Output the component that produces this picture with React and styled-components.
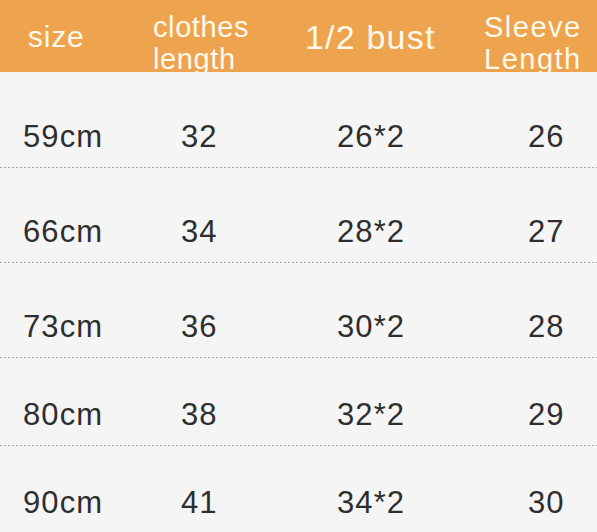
import styled, { createGlobalStyle } from 'styled-components'

const Global = createGlobalStyle`
  html, body { margin: 0; padding: 0; background: #f5f5f5; }
  body { font-family: "Liberation Sans", Arial, sans-serif; }
`;

const Page = styled.div`
  width: 597px;
  height: 532px;
  overflow: hidden;
  background: linear-gradient(#fafafa, #f5f5f5 12px);
`;

const Head = styled.div`
  height: 72px;
  overflow: hidden;
  background: #eea44e;
  color: #fff9ea;
  display: grid;
  grid-template-columns: 153px 152px 179px 1fr;
  align-items: center;
`;

const HeadCell = styled.div`
  font-size: ${p => p.size}px;
  letter-spacing: ${p => p.ls}px;
  padding-left: ${p => p.pl || 0}px;
  line-height: ${p => (p.two ? '32px' : '1.15')};
  align-self: ${p => (p.two ? 'start' : 'center')};
  padding-top: ${p => (p.two ? 11 : 0)}px;
  white-space: nowrap;
`;

const Row = styled.div`
  height: ${p => p.h}px;
  box-sizing: border-box;
  display: grid;
  grid-template-columns: 158px 156px 191px 1fr;
  align-items: end;
  padding-left: 23px;
  padding-bottom: 16px;
  background-image: linear-gradient(to right, #a9a9a9 50%, transparent 50%);
  background-size: 4px 1px;
  background-repeat: repeat-x;
  background-position: left bottom;
`;

const Cell = styled.div`
  font-size: 31px;
  line-height: 30px;
  letter-spacing: 1.1px;
  color: #2e2e2e;
`;

const rows = [
  ['59cm', '32', '26*2', '26', 96],
  ['66cm', '34', '28*2', '27', 95],
  ['73cm', '36', '30*2', '28', 95],
  ['80cm', '38', '32*2', '29', 88],
  ['90cm', '41', '34*2', '30', 88],
];

export default function App() {
  return (
    <Page>
      <Global />
      <Head>
        <HeadCell size={30} ls={0.8} pl={28}>size</HeadCell>
        <HeadCell size={29} ls={0.6} two>clothes<br />length</HeadCell>
        <HeadCell size={34} ls={1.2}>1/2 bust</HeadCell>
        <HeadCell size={29} ls={1.5} two>Sleeve<br />Length</HeadCell>
      </Head>
      {rows.map(r => (
        <Row key={r[0]} h={r[4]}>
          <Cell>{r[0]}</Cell>
          <Cell>{r[1]}</Cell>
          <Cell>{r[2]}</Cell>
          <Cell>{r[3]}</Cell>
        </Row>
      ))}
    </Page>
  )
}
